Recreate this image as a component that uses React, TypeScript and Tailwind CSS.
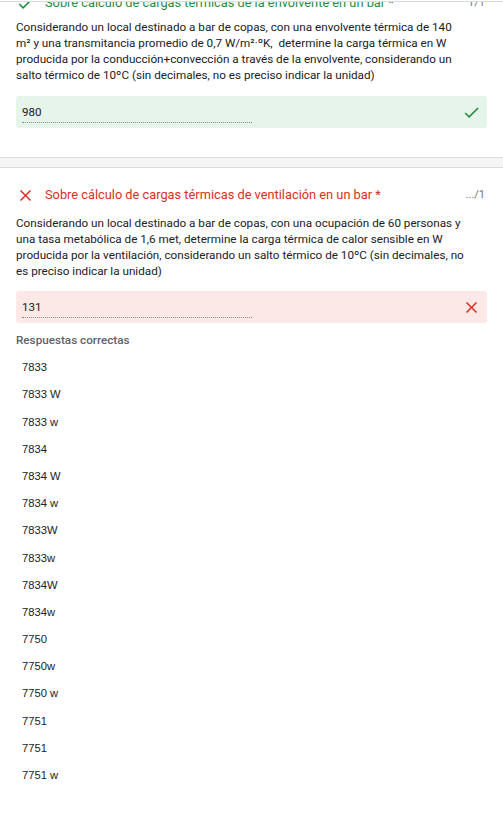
import React from "react";

const checkPath = "M9 16.17L4.83 12l-1.42 1.41L9 19 21 7l-1.41-1.41z";
const closePath =
  "M19 6.41L17.59 5 12 10.59 6.41 5 5 6.41 10.59 12 5 17.59 6.41 19 12 13.41 17.59 19 19 17.59 13.41 12z";

const Icon = ({ d, className }: { d: string; className: string }) => (
  <svg viewBox="0 0 24 24" className={className} fill="currentColor">
    <path d={d} />
  </svg>
);

const answers = [
  "7833",
  "7833 W",
  "7833 w",
  "7834",
  "7834 W",
  "7834 w",
  "7833W",
  "7833w",
  "7834W",
  "7834w",
  "7750",
  "7750w",
  "7750 w",
  "7751",
  "7751",
  "7751 w",
];

interface IAnswerBoxProps {
  value: string;
  correct: boolean;
}

const AnswerBox = ({ value, correct }: IAnswerBoxProps) => (
  <div
    className={`flex items-center justify-between h-[32px] rounded-[3px] pl-[6px] pr-[6px] ${
      correct ? "bg-[#e6f4ea]" : "bg-[#fce8e6]"
    }`}
  >
    <div className="w-[230px] h-[20px] mt-[2px] border-b border-dotted border-[#80868b] text-[11.6px] leading-[18px] text-[#202124]">
      {value}
    </div>
    {correct ? (
      <Icon d={checkPath} className="w-[19px] h-[19px] text-[#1e8e3e]" />
    ) : (
      <Icon d={closePath} className="w-[19px] h-[19px] text-[#d93025]" />
    )}
  </div>
);

const App = () => {
  return (
    <div
      className="relative w-full min-h-[815px] bg-white overflow-hidden"
      style={{ fontFamily: "Roboto, Arial, sans-serif" }}
    >
      {/* sticky header edge */}
      <div className="absolute top-0 left-0 right-0 h-[2px] bg-white border-b border-[#dadce0] z-10"></div>

      {/* card 1 */}
      <div className="px-4 pb-[29px]">
        <div className="flex items-center h-[20px] -mt-[7px]">
          <Icon d={checkPath} className="w-[19px] h-[19px] text-[#1e8e3e] shrink-0" />
          <span className="ml-[10px] text-[12.8px] text-[#1e8e3e] whitespace-nowrap overflow-hidden">
            Sobre cálculo de cargas térmicas de la envolvente en un bar *
          </span>
          <span className="ml-auto pr-[2px] text-[11px] text-[#70757a]">1/1</span>
        </div>
        <p className="mt-[6px] text-[11.7px] leading-[16px] text-[#202124] pr-[18px]">
          Considerando un local destinado a bar de copas, con una envolvente térmica de 140 m² y
          una transmitancia promedio de 0,7 W/m²·ºK,&nbsp; determine la carga térmica en W
          producida por la conducción+convección a través de la envolvente, considerando un
          salto térmico de 10ºC (sin decimales, no es preciso indicar la unidad)
        </p>
        <div className="mt-[13px]">
          <AnswerBox value="980" correct />
        </div>
      </div>

      {/* separator */}
      <div className="h-[11px] bg-[#f5f5f5] border-y border-[#dadce0]"></div>

      {/* card 2 */}
      <div className="px-4 pt-[17px] pb-[26px]">
        <div className="flex items-center h-[20px]">
          <Icon d={closePath} className="w-[19px] h-[19px] text-[#d93025] shrink-0" />
          <span className="ml-[10px] text-[12.8px] text-[#d93025]">
            Sobre cálculo de cargas térmicas de ventilación en un bar *
          </span>
          <span className="ml-auto pr-[2px] text-[11px] text-[#70757a]">.../1</span>
        </div>
        <p className="mt-[10px] text-[11.7px] leading-[16px] text-[#202124] pr-[18px]">
          Considerando un local destinado a bar de copas, con una ocupación de 60 personas y una
          tasa metabólica de 1,6 met, determine la carga térmica de calor sensible en W producida
          por la ventilación, considerando un salto térmico de 10ºC (sin decimales, no es preciso
          indicar la unidad)
        </p>
        <div className="mt-[12px]">
          <AnswerBox value="131" correct={false} />
        </div>
        <div className="mt-[9px] text-[11.7px] leading-[16px] font-medium text-[#5f6368]">
          Respuestas correctas
        </div>
        <ul className="mt-[6px]">
          {answers.map((a, i) => (
            <li
              key={i}
              className="flex items-center h-[27.2px] pl-[6px] text-[11.2px] text-[#202124]"
              style={{ fontFamily: '"Liberation Sans", Arial, sans-serif' }}
            >
              {a}
            </li>
          ))}
        </ul>
      </div>
    </div>
  );
};

export default App;
